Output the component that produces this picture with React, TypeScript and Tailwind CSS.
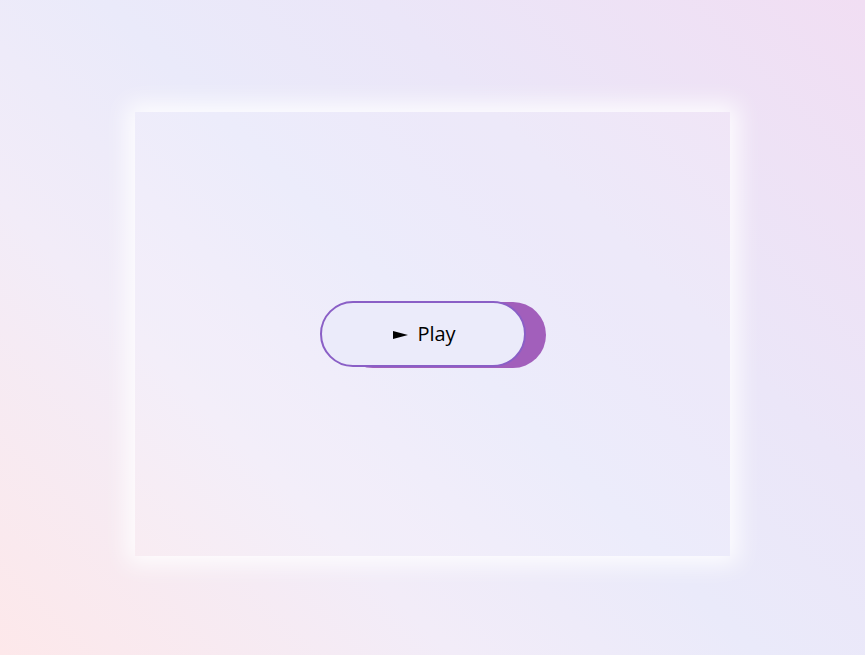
export default function App() {
  return (
    <div className="min-h-screen w-full bg-[linear-gradient(45deg,#fde8ea_0%,#f2ecf8_30%,#eaeafa_50%,#ebe6f8_68%,#f1def3_100%)] pt-[112px] flex justify-center font-['Open_Sans','Noto_Sans',sans-serif]">
      <div className="w-[595px] h-[444px] bg-white/10 shadow-[0_0_22px_8px_rgba(255,255,255,0.9)] flex items-center justify-center">
        <button className="mr-5 w-[206px] h-[66px] rounded-full border-2 border-[#8a5fc6] bg-[#ebebfa] shadow-[20px_1px_0_0_#a25fbb] flex items-center justify-center gap-[9px] pl-1 text-[20px] text-black">
          <svg width="15" height="8" viewBox="0 0 15 8" className="mt-[1px]">
            <path d="M0 0 L15 4 L0 8 Z" fill="#000" />
          </svg>
          <span className="leading-none">Play</span>
        </button>
      </div>
    </div>
  );
}
